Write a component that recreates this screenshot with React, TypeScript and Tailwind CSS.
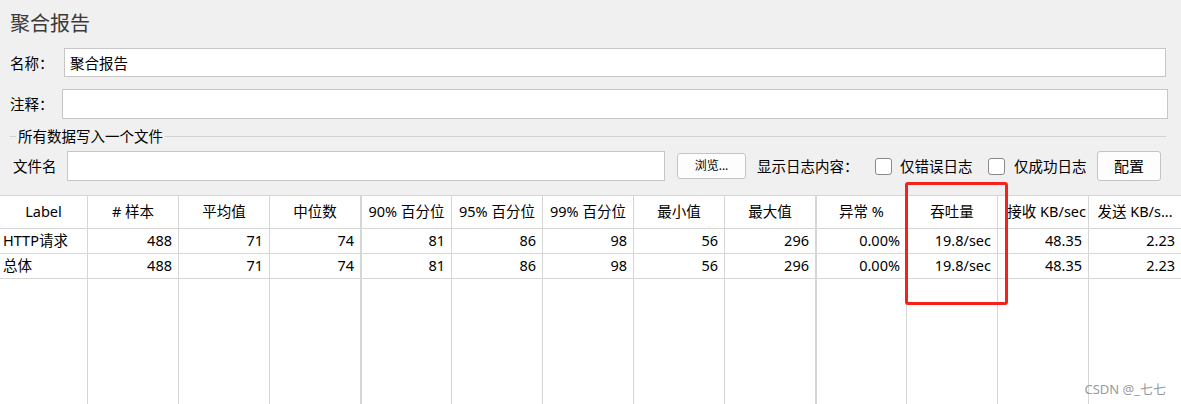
import React from "react";

type Col = { head: string; w: string; r1: string; r2: string; left?: boolean; headCls?: string };

const cols: Col[] = [
  { head: "Label", w: "w-[88px] border-r", r1: "HTTP请求", r2: "总体", left: true },
  { head: "# 样本", w: "w-[91px] border-r", r1: "488", r2: "488" },
  { head: "平均值", w: "w-[91px] border-r", r1: "71", r2: "71" },
  { head: "中位数", w: "w-[92px] border-r-2", r1: "74", r2: "74" },
  { head: "90% 百分位", w: "w-[90px] border-r", r1: "81", r2: "81" },
  { head: "95% 百分位", w: "w-[91px] border-r", r1: "86", r2: "86" },
  { head: "99% 百分位", w: "w-[91px] border-r", r1: "98", r2: "98" },
  { head: "最小值", w: "w-[91px] border-r", r1: "56", r2: "56" },
  { head: "最大值", w: "w-[92px] border-r-2", r1: "296", r2: "296" },
  { head: "异常 %", w: "w-[90px] border-r", r1: "0.00%", r2: "0.00%" },
  { head: "吞吐量", w: "w-[91px] border-r", r1: "19.8/sec", r2: "19.8/sec" },
  { head: "接收 KB/sec", w: "w-[91px] border-r", r1: "48.35", r2: "48.35", headCls: "justify-end pr-[2px]" },
  { head: "发送 KB/s...", w: "flex-1", r1: "2.23", r2: "2.23" },
];

function Checkbox() {
  return <div className="h-[17px] w-[17px] shrink-0 rounded-[3px] border border-[#8a8a8a] bg-white" />;
}

export default function App() {
  return (
    <div className="relative flex h-[404px] w-[1181px] flex-col overflow-hidden bg-[#f0f0f0] font-['Noto_Sans','Noto_Sans_CJK_SC',sans-serif] text-[14.5px] text-black">
      <div className="pl-[10px] pt-[12px] text-[20px] leading-[24px] text-[#3a3a3a]">聚合报告</div>

      <div className="mt-[12px] flex items-center pl-[10px] pr-[15px]">
        <span className="w-[54px] shrink-0 leading-[20px]">名称：</span>
        <div className="flex h-[29px] flex-1 items-center border border-[#c6c6c6] bg-white pl-[5px] leading-[20px]">聚合报告</div>
      </div>

      <div className="mt-[12px] flex items-center pl-[10px] pr-[13px]">
        <span className="w-[52px] shrink-0 leading-[20px]">注释：</span>
        <div className="h-[30px] flex-1 border border-[#c6c6c6] bg-white" />
      </div>

      <div className="ml-[10px] mr-[15px] mt-[7px] flex h-[20px] items-center">
        <div className="h-px w-[6px] bg-[#d3d3d3]" />
        <span className="px-[2px] leading-[20px]">所有数据写入一个文件</span>
        <div className="h-px flex-1 bg-[#d3d3d3]" />
      </div>

      <div className="mt-[5px] flex h-[30px] items-center pl-[13px]">
        <span className="w-[54px] shrink-0 leading-[20px]">文件名</span>
        <div className="h-[30px] w-[598px] shrink-0 border border-[#c6c6c6] bg-white" />
        <div className="ml-[12px] flex h-[26px] w-[69px] shrink-0 items-center justify-center rounded-[3px] border border-[#c4c4c4] bg-[#fdfdfd] text-[12px]">浏览...</div>
        <span className="ml-[11px] w-[118px] shrink-0 leading-[20px]">显示日志内容：</span>
        <Checkbox />
        <span className="ml-[8px] w-[88px] shrink-0 leading-[20px]">仅错误日志</span>
        <Checkbox />
        <span className="ml-[9px] w-[83px] shrink-0 leading-[20px]">仅成功日志</span>
        <div className="flex h-[30px] w-[64px] shrink-0 items-center justify-center rounded-[3px] border border-[#c4c4c4] bg-[#fdfdfd] text-[15px]">配置</div>
      </div>

      <div className="mt-[14px] flex flex-1 border-t border-[#d6d6d6] bg-white">
        {cols.map((c) => (
          <div key={c.head} className={`flex flex-col border-[#d6d6d6] ${c.w}`}>
            <div className={`flex h-[33px] items-center overflow-hidden whitespace-nowrap border-b border-[#d6d6d6] ${c.headCls ?? "justify-center"}`}>
              {c.head}
            </div>
            {[c.r1, c.r2].map((v, i) => (
              <div
                key={i}
                className={`flex h-[25px] items-center whitespace-nowrap border-b border-[#d6d6d6] ${c.left ? "justify-start pl-[3px]" : "justify-end pr-[6px]"}`}
              >
                {v}
              </div>
            ))}
          </div>
        ))}
      </div>

      <div className="absolute left-[905px] top-[182px] h-[123px] w-[103px] rounded-[3px] border-[3px] border-[#f5221b]" />
      <div className="absolute bottom-[7px] right-[15px] text-[13px] leading-[16px] text-[#9a9a9a]">CSDN @_七七</div>
    </div>
  );
}
